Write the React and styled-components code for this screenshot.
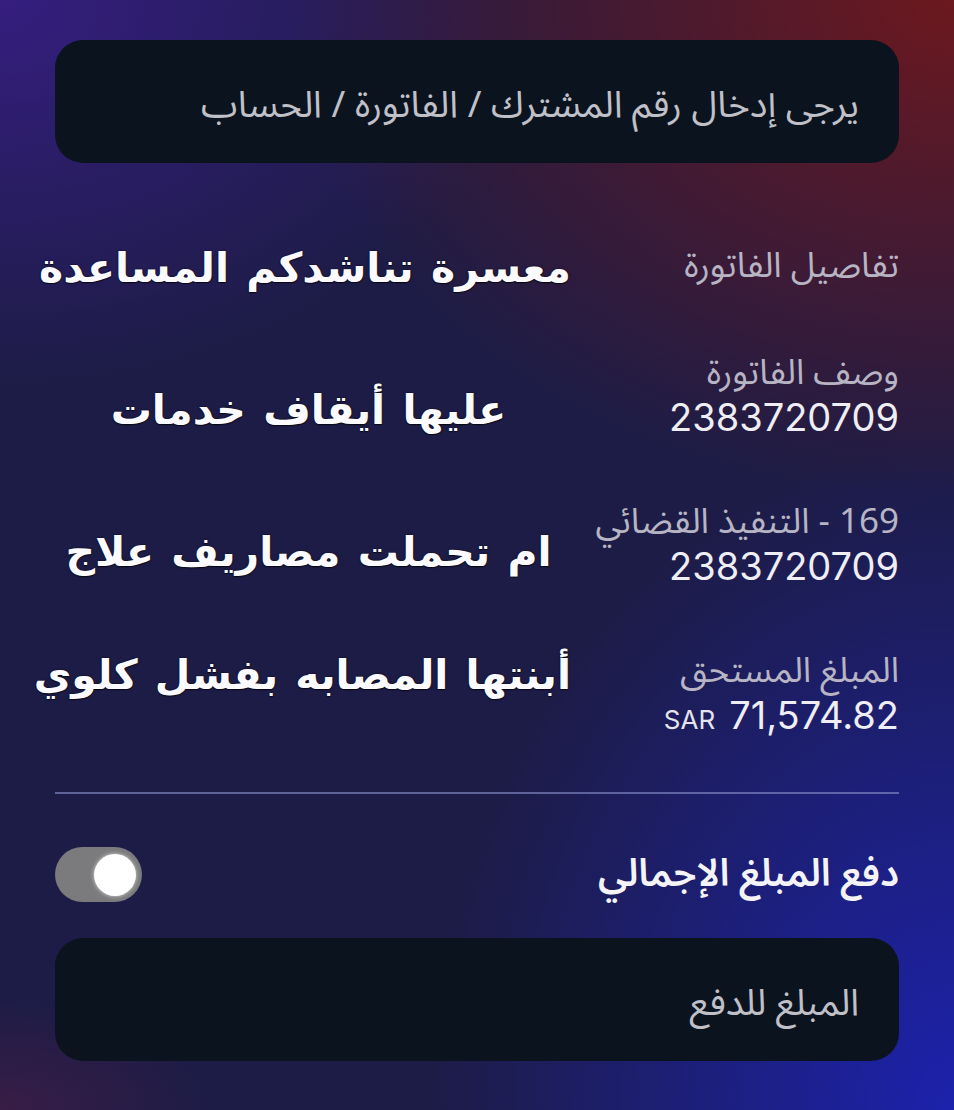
import React from "react";
import styled, { createGlobalStyle } from "styled-components";

const Global = createGlobalStyle`
  html, body { margin: 0; padding: 0; background: #1d1c46; }
  * { box-sizing: border-box; }
`;

const arabic = `"Noto Sans Arabic", "Noto Naskh Arabic", "DejaVu Sans", sans-serif`;
const latin = `Inter, "Noto Sans", "DejaVu Sans", sans-serif`;

const Screen = styled.div`
  width: 954px;
  height: 1110px;
  overflow: hidden;
  padding: 40px 55px 0 55px;
  display: flex;
  flex-direction: column;
  font-family: ${arabic};
  background:
    radial-gradient(ellipse 70% 45% at 100% 0%, rgba(112, 24, 28, 0.95), rgba(112, 24, 28, 0) 100%),
    radial-gradient(ellipse 55% 35% at 0% 0%, rgba(54, 30, 130, 0.95), rgba(54, 30, 130, 0) 100%),
    radial-gradient(ellipse 55% 60% at 100% 100%, rgba(28, 34, 178, 0.95), rgba(28, 34, 178, 0) 100%),
    radial-gradient(ellipse 22% 10% at 0% 100%, rgba(90, 30, 70, 0.45), rgba(90, 30, 70, 0) 100%),
    #1d1c46;
`;

const Field = styled.div`
  height: 123px;
  border-radius: 28px;
  background: #0b131f;
  display: flex;
  align-items: center;
  padding: 6px 40px 0;
  flex-shrink: 0;
`;

const Placeholder = styled.span`
  font-family: ${arabic};
  font-size: 37px;
  line-height: 50px;
  color: #c0c0c8;
  white-space: nowrap;
`;

const Details = styled.div`
  margin-top: 79px;
  display: flex;
  flex-direction: column;
  gap: 61px;
`;

const Row = styled.div`
  display: flex;
  align-items: center;
  justify-content: space-between;
  min-height: 47px;
`;

const Block = styled.div`
  display: flex;
  flex-direction: column;
  align-items: flex-start;
`;

const Label = styled.div`
  font-family: ${arabic};
  font-size: 35px;
  line-height: 44px;
  color: #b7b4c4;
  white-space: nowrap;
`;

const Value = styled.div`
  font-family: ${latin};
  font-size: 38px;
  line-height: 44px;
  height: 44px;
  color: #eeeef4;
  direction: ltr;
  unicode-bidi: isolate;
  white-space: nowrap;
`;

const Currency = styled.span`
  font-size: 26px;
  line-height: 1;
  margin-right: 14px;
  color: #e4e4ec;
`;

const Caption = styled.div`
  width: 525px;
  margin-left: -9px;
  text-align: center;
  font-family: "DejaVu Sans", sans-serif;
  font-weight: 700;
  font-size: 41px;
  word-spacing: 3px;
  color: #fbfbff;
  white-space: nowrap;
  text-shadow: 0 0 2px rgba(0, 0, 0, 0.8), 0 1px 1px rgba(0, 0, 0, 0.6);
  transform: translateY(${(p) => p.$shift || 0}px);
`;

const Divider = styled.div`
  margin-top: 55px;
  height: 2px;
  background: rgba(140, 146, 205, 0.6);
  flex-shrink: 0;
`;

const ToggleRow = styled.div`
  margin-top: 53px;
  display: flex;
  align-items: center;
  justify-content: space-between;
`;

const ToggleTitle = styled.div`
  font-family: ${arabic};
  font-size: 38px;
  line-height: 55px;
  font-weight: 600;
  color: #f4f4f8;
  white-space: nowrap;
`;

const Track = styled.div`
  width: 87px;
  height: 55px;
  border-radius: 28px;
  background: #7b7b7e;
  display: flex;
  align-items: center;
  justify-content: flex-start;
  padding: 0 6px;
`;

const Knob = styled.div`
  width: 42px;
  height: 42px;
  border-radius: 50%;
  background: #ffffff;
  box-shadow: 0 0 4px rgba(255, 255, 255, 0.7);
`;

const BottomField = styled(Field)`
  margin-top: 36px;
`;

const rows = [
  { label: "وصف الفاتورة", value: "2383720709", caption: "عليها أيقاف خدمات", shift: 15 },
  { label: "169 - التنفيذ القضائي", value: "2383720709", caption: "ام تحملت مصاريف علاج", shift: 8 },
];

export default function App() {
  return (
    <>
      <Global />
      <Screen dir="rtl">
        <Field>
          <Placeholder>يرجى إدخال رقم المشترك / الفاتورة / الحساب</Placeholder>
        </Field>
        <Details>
          <Row>
            <Block>
              <Label>تفاصيل الفاتورة</Label>
            </Block>
            <Caption $shift={2}>معسرة تناشدكم المساعدة</Caption>
          </Row>
          {rows.map((r) => (
            <Row key={r.label}>
              <Block>
                <Label>{r.label}</Label>
                <Value>{r.value}</Value>
              </Block>
              <Caption $shift={r.shift}>{r.caption}</Caption>
            </Row>
          ))}
          <Row>
            <Block>
              <Label>المبلغ المستحق</Label>
              <Value>
                <Currency>SAR</Currency>71,574.82
              </Value>
            </Block>
            <Caption $shift={-18}>أبنتها المصابه بفشل كلوي</Caption>
          </Row>
        </Details>
        <Divider />
        <ToggleRow>
          <ToggleTitle>دفع المبلغ الإجمالي</ToggleTitle>
          <Track>
            <Knob />
          </Track>
        </ToggleRow>
        <BottomField>
          <Placeholder>المبلغ للدفع</Placeholder>
        </BottomField>
      </Screen>
    </>
  );
}
